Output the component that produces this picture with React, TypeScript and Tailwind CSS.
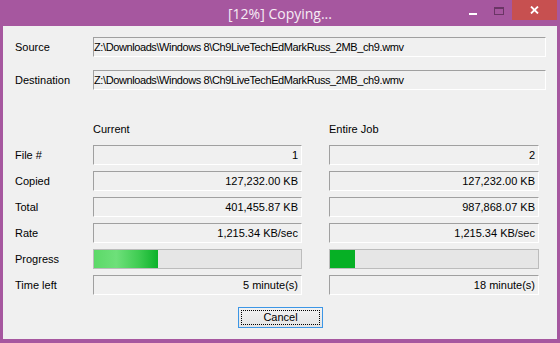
import React from "react";

const font = { fontFamily: '"Liberation Sans", Arial, sans-serif' };

function Field({ children, w, align = "right", tight = false }: { children?: React.ReactNode; w: string; align?: "left" | "right"; tight?: boolean }) {
  return (
    <div
      className={`${w} h-[20px] flex items-center border-t border-l border-b border-r border-t-[#a0a0a0] border-l-[#a0a0a0] border-b-white border-r-white bg-[#f0f0f0] text-[11px] text-black whitespace-nowrap overflow-hidden ${
        align === "right" ? "justify-end pr-[3px]" : "justify-start pl-0"
      } ${tight ? "tracking-[-0.4px]" : ""}`}
    >
      {children}
    </div>
  );
}

function Row({ label, a, b }: { label: string; a: React.ReactNode; b: React.ReactNode }) {
  return (
    <div className="flex items-center h-[20px]">
      <div className="w-[78px] text-[11px] text-black">{label}</div>
      <div className="w-[209px]">{a}</div>
      <div className="w-[27px]" />
      <div className="w-[210px]">{b}</div>
    </div>
  );
}

function Progress({ w, fill, fillClass }: { w: string; fill: string; fillClass: string }) {
  return (
    <div className={`${w} h-[20px] border border-[#bcbcbc] bg-[#e6e6e6] flex p-0`}>
      <div className={`${fill} h-full ${fillClass}`} />
    </div>
  );
}

export default function App() {
  return (
    <div className="w-[560px] h-[343px] bg-[#a6579f] flex flex-col overflow-hidden" style={font}>
      {/* Title bar */}
      <div className="h-[26px] grid grid-cols-[1fr_auto_1fr] items-start shrink-0">
        <div />
        <div
          className="h-[26px] flex items-center text-[14px] text-[#f6ecf4]"
          style={{ fontFamily: '"Open Sans", "Noto Sans", sans-serif' }}
        >
          [12%] Copying...
        </div>
        <div className="flex justify-end items-start pr-[3px]">
          <div className="w-[26px] h-[20px] flex items-center justify-center">
            <div className="w-[8px] h-[2px] bg-white mt-[8px]" />
          </div>
          <div className="w-[26px] h-[20px] flex items-start justify-center pt-[7px]">
            <div className="w-[10px] h-[8px] border border-t-2 border-[#6a3565]" />
          </div>
          <div className="w-[45px] h-[20px] bg-[#c75050] flex items-center justify-center">
            <svg width="9" height="8" viewBox="0 0 9 8">
              <path d="M1 0.5 L8 7.5 M8 0.5 L1 7.5" stroke="white" strokeWidth="1.8" />
            </svg>
          </div>
        </div>
      </div>

      {/* Client area */}
      <div className="ml-[3px] mr-[3px] mb-[4px] flex-1 bg-[#f0f0f0] pl-[12px] pt-[11px] flex flex-col">
        <div className="flex items-center h-[20px]">
          <div className="w-[78px] text-[11px] text-black">Source</div>
          <Field w="w-[453px]" align="left" tight>Z:\Downloads\Windows 8\Ch9LiveTechEdMarkRuss_2MB_ch9.wmv</Field>
        </div>
        <div className="flex items-center h-[20px] mt-[13px]">
          <div className="w-[78px] text-[11px] text-black">Destination</div>
          <Field w="w-[453px]" align="left" tight>Z:\Downloads\Windows 8\Ch9LiveTechEdMarkRuss_2MB_ch9.wmv</Field>
        </div>

        <div className="flex flex-col gap-[6px] mt-[29px]">
          <div className="flex items-center h-[20px] text-[11px] text-black">
            <div className="w-[78px]" />
            <div className="w-[236px]">Current</div>
            <div>Entire Job</div>
          </div>
          <Row label="File #" a={<Field w="w-[209px]">1</Field>} b={<Field w="w-[210px]">2</Field>} />
          <Row label="Copied" a={<Field w="w-[209px]">127,232.00 KB</Field>} b={<Field w="w-[210px]">127,232.00 KB</Field>} />
          <Row label="Total" a={<Field w="w-[209px]">401,455.87 KB</Field>} b={<Field w="w-[210px]">987,868.07 KB</Field>} />
          <Row label="Rate" a={<Field w="w-[209px]">1,215.34 KB/sec</Field>} b={<Field w="w-[210px]">1,215.34 KB/sec</Field>} />
          <Row
            label="Progress"
            a={
              <Progress
                w="w-[209px]"
                fill="w-[64px]"
                fillClass="bg-[linear-gradient(90deg,#5cd968_0%,#6ee07a_35%,#3fcc52_70%,#0cb22a_100%)]"
              />
            }
            b={<Progress w="w-[210px]" fill="w-[25px]" fillClass="bg-[#06b025]" />}
          />
          <Row label="Time left" a={<Field w="w-[209px]">5 minute(s)</Field>} b={<Field w="w-[210px]">18 minute(s)</Field>} />
        </div>

        <div className="flex justify-center mt-[12px] pr-[12px]">
          <div className="w-[85px] h-[21px] border border-[#3c96e6] bg-[linear-gradient(#f2f2f2,#e4e4e4)] p-[2px] ml-[1px]">
            <div className="w-full h-full border border-dotted border-black flex items-center justify-center text-[11px] text-black">
              Cancel
            </div>
          </div>
        </div>
      </div>
    </div>
  );
}
